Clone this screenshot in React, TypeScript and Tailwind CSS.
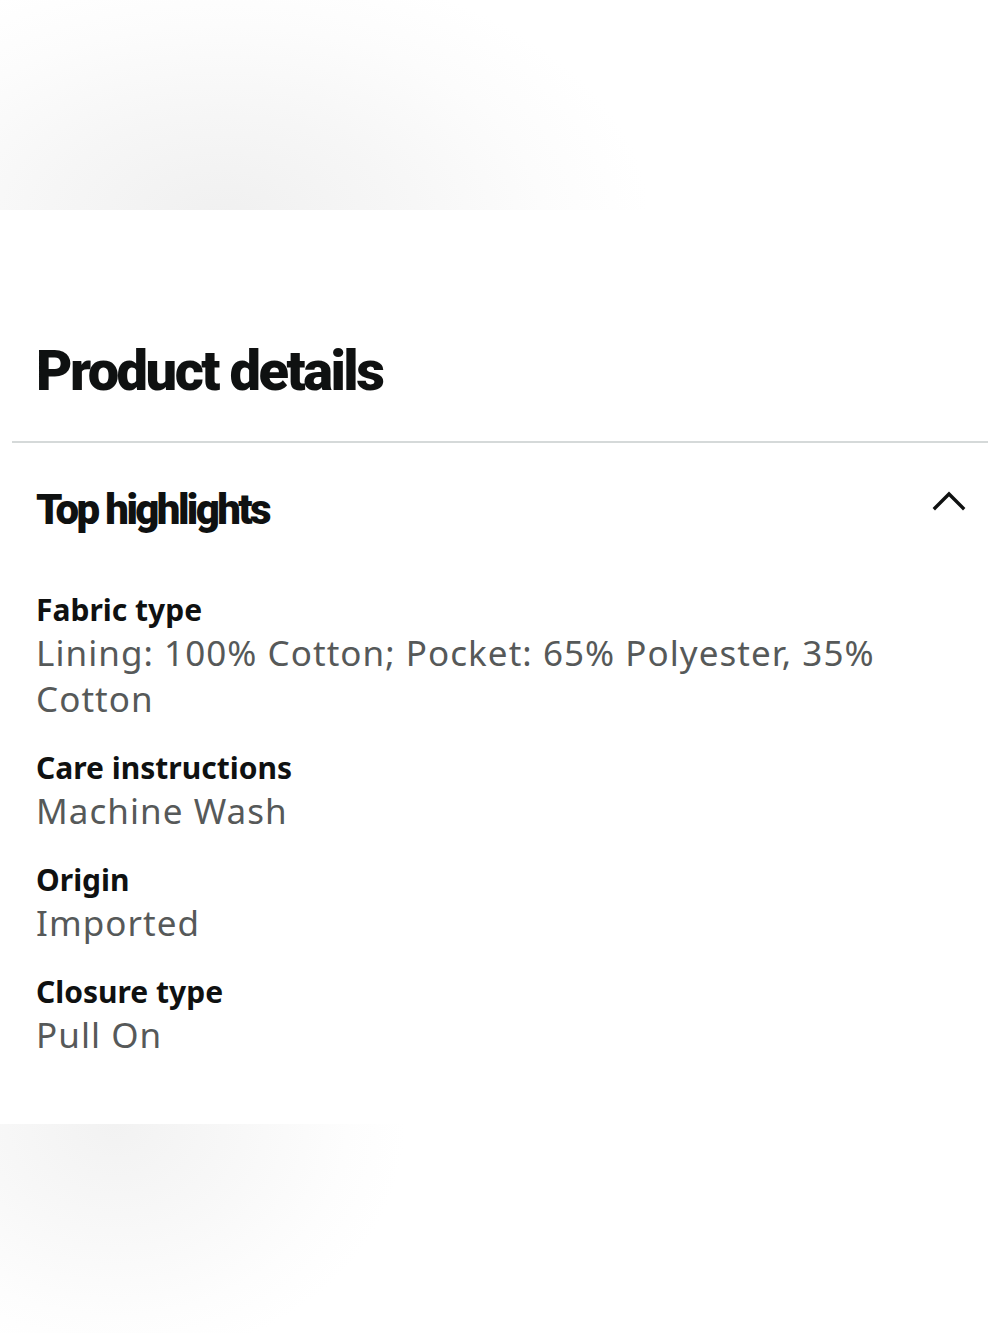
import React from 'react'

const details = [
  { label: 'Fabric type', value: 'Lining: 100% Cotton; Pocket: 65% Polyester, 35% Cotton' },
  { label: 'Care instructions', value: 'Machine Wash' },
  { label: 'Origin', value: 'Imported' },
  { label: 'Closure type', value: 'Pull On' },
]

function ChevronUp() {
  return (
    <svg width="34" height="22" viewBox="0 0 34 22" fill="none">
      <path d="M3 19 L17 5 L31 19" stroke="#0f1111" strokeWidth="3.4" strokeLinecap="square" />
    </svg>
  )
}

export default function App() {
  return (
    <div className="min-h-[1333px] w-[1000px] bg-white font-['Noto_Sans',sans-serif]">
      <div className="h-[210px] bg-[radial-gradient(ellipse_430px_260px_at_220px_220px,#f0f0f0_0%,#f6f6f6_40%,#fcfcfc_75%,#ffffff_100%)]" />
      <div className="px-3 pt-[131px]">
        <h2 className="px-6 font-['Roboto',sans-serif] text-[56px] font-black leading-[60px] tracking-[-0.045em] text-[#0f1111]">
          Product details
        </h2>
        <div className="mt-[40px] h-[2px] bg-[#d5d9d9]" />
        <div className="flex items-start justify-between pl-6 pr-[22px] pt-[44px]">
          <h3 className="font-['Roboto',sans-serif] text-[42px] font-black leading-[46px] tracking-[-0.063em] text-[#0f1111]">
            Top highlights
          </h3>
          <div className="mt-[2px]">
            <ChevronUp />
          </div>
        </div>
        <div className="flex flex-col gap-[26px] px-6 pt-[57px]">
          {details.map((d) => (
            <div key={d.label} className="flex flex-col">
              <span className="text-[30px] font-bold leading-[40px] text-[#0f1111]">{d.label}</span>
              <span className="max-w-[880px] text-[35px] leading-[46px] tracking-[0.03em] text-[#565959]">{d.value}</span>
            </div>
          ))}
        </div>
      </div>
      <div className="mt-[66px] h-[210px] bg-[radial-gradient(ellipse_290px_240px_at_115px_0px,#f2f2f2_0%,#f8f8f8_45%,#fdfdfd_80%,#ffffff_100%)]" />
    </div>
  )
}
